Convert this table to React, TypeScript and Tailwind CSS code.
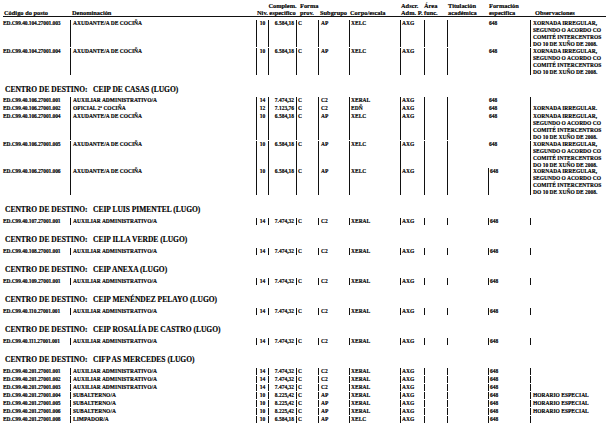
import clsx from "clsx";

type Row = {
  code: string;
  den: string;
  niv: string;
  comp: string;
  sub: string;
  corpo: string;
  obs?: string[];
  tall?: string;
  noFormLine?: boolean;
};

type Section = { title?: string; rows: Row[] };

const OBS4 = [
  "XORNADA IRREGULAR,",
  "SEGUNDO O ACORDO CO",
  "COMITÉ INTERCENTROS",
  "DO 10 DE XUÑO DE 2008.",
];

const axudante = (code: string, noFormLine = false): Row => ({
  code,
  den: "AXUDANTE/A DE COCIÑA",
  niv: "10",
  comp: "6.584,18",
  sub: "AP",
  corpo: "XELC",
  obs: OBS4,
  tall: "h-[27.5px]",
  noFormLine,
});

const auxiliar = (code: string, noFormLine = false): Row => ({
  code,
  den: "AUXILIAR ADMINISTRATIVO/A",
  niv: "14",
  comp: "7.474,32",
  sub: "C2",
  corpo: "XERAL",
  noFormLine,
});

const subalterno = (code: string): Row => ({
  code,
  den: "SUBALTERNO/A",
  niv: "10",
  comp: "8.225,42",
  sub: "AP",
  corpo: "XERAL",
  obs: ["HORARIO ESPECIAL"],
});

const sections: Section[] = [
  {
    rows: [axudante("ED.C99.40.104.27001.003", true), axudante("ED.C99.40.104.27001.004", true)],
  },
  {
    title: "CEIP DE CASAS (LUGO)",
    rows: [
      auxiliar("ED.C99.40.106.27001.001", true),
      {
        code: "ED.C99.40.106.27001.002",
        den: "OFICIAL 2ª COCIÑA",
        niv: "12",
        comp: "7.123,76",
        sub: "C2",
        corpo: "EDÑ",
        obs: ["XORNADA IRREGULAR."],
        noFormLine: true,
      },
      axudante("ED.C99.40.106.27001.004", true),
      axudante("ED.C99.40.106.27001.005", true),
      axudante("ED.C99.40.106.27001.006"),
    ],
  },
  { title: "CEIP LUIS PIMENTEL (LUGO)", rows: [auxiliar("ED.C99.40.107.27001.001")] },
  { title: "CEIP ILLA VERDE (LUGO)", rows: [auxiliar("ED.C99.40.108.27001.001")] },
  { title: "CEIP ANEXA (LUGO)", rows: [auxiliar("ED.C99.40.109.27001.001")] },
  { title: "CEIP MENÉNDEZ PELAYO (LUGO)", rows: [auxiliar("ED.C99.40.110.27001.001")] },
  { title: "CEIP ROSALÍA DE CASTRO (LUGO)", rows: [auxiliar("ED.C99.40.111.27001.001")] },
  {
    title: "CIFP AS MERCEDES (LUGO)",
    rows: [
      auxiliar("ED.C99.40.201.27001.001"),
      auxiliar("ED.C99.40.201.27001.002"),
      auxiliar("ED.C99.40.201.27001.003"),
      subalterno("ED.C99.40.201.27001.004"),
      subalterno("ED.C99.40.201.27001.005"),
      subalterno("ED.C99.40.201.27001.006"),
      {
        code: "ED.C99.40.201.27001.008",
        den: "LIMPADOR/A",
        niv: "10",
        comp: "6.584,18",
        sub: "AP",
        corpo: "XELC",
      },
    ],
  },
];

const line = "border-l border-[#111]";

function HeadCell({ w, top, bottom, className }: { w: string; top?: string; bottom: string; className?: string }) {
  return (
    <div className={clsx("flex shrink-0 flex-col justify-end whitespace-nowrap", w, className)}>
      {top && <span>{top}</span>}
      <span>{bottom}</span>
    </div>
  );
}

function DataRow({ row }: { row: Row }) {
  return (
    <div className={clsx("flex pt-[0.5px] text-[5.5px] leading-[7px]", row.tall ?? "h-[8px]")}>
      <div className="w-[70px] shrink-0 whitespace-nowrap pl-[3px] tracking-[-0.1px]">{row.code}</div>
      <div className={clsx("w-[186px] shrink-0 whitespace-nowrap pl-[2px]", line)}>{row.den}</div>
      <div className={clsx("w-[12px] shrink-0 text-center", line)}>{row.niv}</div>
      <div className={clsx("w-[28px] shrink-0 whitespace-nowrap pr-[2px] text-right", line)}>{row.comp}</div>
      <div className={clsx("w-[22px] shrink-0 pl-[1px]", line)}>C</div>
      <div className={clsx("w-[31px] shrink-0 pl-[2px]", line)}>{row.sub}</div>
      <div className={clsx("w-[51px] shrink-0 pl-[1px]", line)}>{row.corpo}</div>
      <div className={clsx("w-[24px] shrink-0 pl-[1px]", line)}>AXG</div>
      <div className={clsx("w-[23px] shrink-0", line)} />
      <div className={clsx("w-[41px] shrink-0", line)} />
      <div className={clsx("w-[42px] shrink-0 pl-[1px]", !row.noFormLine && line)}>648</div>
      <div className={clsx("w-[80px] shrink-0 whitespace-nowrap pl-[2px]", line)}>
        {row.obs?.map((o) => (
          <div key={o}>{o}</div>
        ))}
      </div>
    </div>
  );
}

export default function App() {
  return (
    <div
      className="relative h-[439px] w-[615px] overflow-hidden bg-white font-bold text-black [-webkit-text-stroke:0.15px_black]"
      style={{ fontFamily: '"Liberation Serif", "Times New Roman", serif' }}
    >
      <div className="ml-[3px] flex w-[603px] border-b border-[#111] pt-[1.5px] text-[6.4px] leading-[7px]">
        <HeadCell w="w-[67px]" bottom="Código do posto" className="pl-[1px]" />
        <HeadCell w="w-[186px]" bottom="Denominación" className="pl-[2px]" />
        <HeadCell w="w-[12px]" bottom="Niv." className="pl-[1px]" />
        <HeadCell w="w-[28px]" top="Complem." bottom="específico" className="items-center pl-[1px]" />
        <HeadCell w="w-[22px]" top="Forma" bottom="prov." className="pl-[4px]" />
        <HeadCell w="w-[31px]" bottom="Subgrupo" className="pl-[2px]" />
        <HeadCell w="w-[51px]" bottom="Corpo/escala" className="pl-[1px]" />
        <HeadCell w="w-[24px]" top="Adscr." bottom="Adm. P." className="pl-[1px]" />
        <HeadCell w="w-[23px]" top="Área" bottom="func." />
        <HeadCell w="w-[41px]" top="Titulación" bottom="académica" className="pl-[1px]" />
        <HeadCell w="w-[42px]" top="Formación" bottom="específica" className="pl-[1px]" />
        <HeadCell w="w-[70px]" bottom="Observaciones" className="pl-[5px]" />
      </div>

      <div className="mt-[3px]">
        {sections.map((s, i) => (
          <div key={i}>
            {s.title && (
              <div className="mt-[10px] mb-[3px] flex h-[9px] items-center whitespace-nowrap pl-[5px] text-[7.5px] leading-[9px]">
                <span className="w-[88px] shrink-0">CENTRO DE DESTINO:</span>
                <span>{s.title}</span>
              </div>
            )}
            {s.rows.map((r) => (
              <DataRow key={r.code} row={r} />
            ))}
          </div>
        ))}
      </div>
    </div>
  );
}
